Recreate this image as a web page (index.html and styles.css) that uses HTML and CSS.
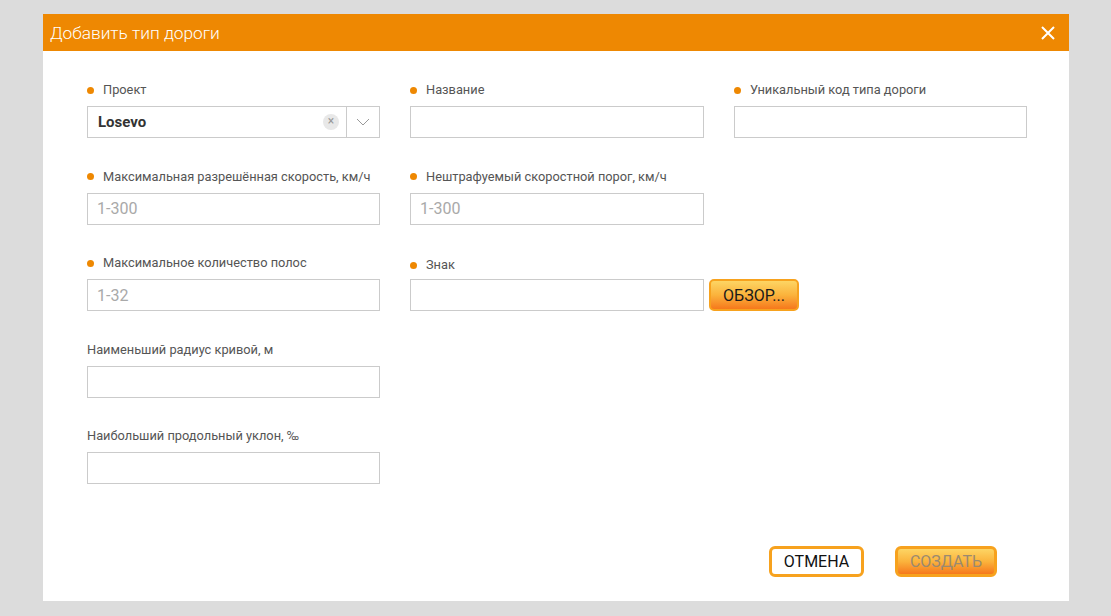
FILE: index.html
```html
<!DOCTYPE html>
<html lang="ru">
<head>
<meta charset="utf-8">
<title>Добавить тип дороги</title>
<link rel="stylesheet" href="styles.css">
</head>
<body>
<div class="dialog">
  <div class="dialog-header">
    <span class="dialog-title">Добавить тип дороги</span>
    <button class="close-btn" aria-label="Закрыть">
      <svg width="14" height="14" viewBox="0 0 14 14"><path d="M1 1L13 13M13 1L1 13" stroke="#fff" stroke-width="2" fill="none"/></svg>
    </button>
  </div>
  <div class="dialog-body">
    <div class="form-grid">
      <div class="field">
        <label class="label required">Проект</label>
        <div class="select">
          <span class="select-value">Losevo</span>
          <span class="select-clear">×</span>
          <span class="select-arrow">
            <svg width="14" height="8" viewBox="0 0 14 8"><path d="M1 1L7 7L13 1" stroke="#999" stroke-width="1" fill="none"/></svg>
          </span>
        </div>
      </div>
      <div class="field">
        <label class="label required">Название</label>
        <input class="input" type="text">
      </div>
      <div class="field">
        <label class="label required">Уникальный код типа дороги</label>
        <input class="input" type="text">
      </div>

      <div class="field">
        <label class="label required">Максимальная разрешённая скорость, км/ч</label>
        <input class="input" type="text" placeholder="1-300">
      </div>
      <div class="field">
        <label class="label required">Нештрафуемый скоростной порог, км/ч</label>
        <input class="input" type="text" placeholder="1-300">
      </div>
      <div class="field empty"></div>

      <div class="field">
        <label class="label required">Максимальное количество полос</label>
        <input class="input" type="text" placeholder="1-32">
      </div>
      <div class="field field-wide">
        <label class="label required label-sign">Знак</label>
        <div class="file-row">
          <input class="input" type="text">
          <button class="btn btn-orange browse">ОБЗОР...</button>
        </div>
      </div>

      <div class="field col1">
        <label class="label">Наименьший радиус кривой, м</label>
        <input class="input" type="text">
      </div>

      <div class="field col1">
        <label class="label">Наибольший продольный уклон, ‰</label>
        <input class="input" type="text">
      </div>
    </div>
  </div>
  <div class="dialog-footer">
    <button class="btn btn-white">ОТМЕНА</button>
    <button class="btn btn-orange btn-disabled">СОЗДАТЬ</button>
  </div>
</div>
</body>
</html>
```

FILE: styles.css
```css
* { box-sizing: border-box; }
html, body { margin: 0; padding: 0; }
body {
  background: #dcdcdc;
  font-family: Roboto, "Liberation Sans", Arial, sans-serif;
  width: 1111px;
  height: 616px;
  overflow: hidden;
  padding: 14px 0 0 43px;
}
.dialog {
  width: 1026px;
  height: 587px;
  background: #fff;
  display: flex;
  flex-direction: column;
}
.dialog-header {
  height: 37px;
  background: #ee8802;
  display: flex;
  align-items: center;
  justify-content: space-between;
  padding: 0 14px 0 7px;
}
.dialog-title {
  color: #fff;
  font-size: 17.3px;
  font-weight: 300;
}
.close-btn {
  background: none;
  border: 0;
  padding: 0;
  width: 14px;
  height: 14px;
  display: flex;
  cursor: pointer;
}
.dialog-body {
  padding: 31px 42px 0 44px;
}
.form-grid {
  display: grid;
  grid-template-columns: 293px 294px 293px;
  column-gap: 30px;
  row-gap: 30.5px;
}
.col1 { grid-column: 1; }
.field-wide { grid-column: 2 / span 2; }
.field { display: flex; flex-direction: column; }
.label {
  display: flex;
  align-items: center;
  height: 16px;
  line-height: 16px;
  font-size: 12.8px;
  color: #555;
  margin-bottom: 8px;
}
.label.required::before {
  content: "";
  width: 7px;
  height: 7px;
  border-radius: 50%;
  background: #ee8802;
  margin: 0 9px 0 0;
  flex: none;
}
.label-sign { position: relative; top: 2px; }
.input {
  width: 293px;
  height: 32px;
  border: 1px solid #cbcbcb;
  background: #fff;
  padding: 0 9px;
  font-family: Roboto, "Liberation Sans", Arial, sans-serif;
  font-size: 16px;
  color: #333;
  outline: none;
}
.field:nth-child(3n+2) .input { width: 294px; }
.input::placeholder { color: #a9a9a9; }
.select {
  width: 293px;
  height: 32px;
  border: 1px solid #cbcbcb;
  display: flex;
  align-items: center;
}
.select-value {
  flex: 1;
  padding-left: 10px;
  font-size: 15px;
  font-weight: 700;
  color: #333;
}
.select-clear {
  width: 16px;
  height: 16px;
  border-radius: 50%;
  background: #e8e8e8;
  color: #999;
  font-size: 12px;
  line-height: 15px;
  text-align: center;
  margin-right: 7px;
}
.select-arrow {
  width: 33px;
  height: 30px;
  border-left: 1px solid #cbcbcb;
  display: flex;
  align-items: center;
  justify-content: center;
}
.file-row {
  display: flex;
  align-items: center;
  gap: 5px;
}
.btn {
  font-family: Roboto, "Liberation Sans", Arial, sans-serif;
  font-size: 16px;
  cursor: pointer;
  padding: 0;
  text-transform: uppercase;
}
.btn-orange {
  border: 2px solid #f7a21e;
  border-radius: 5px;
  background: linear-gradient(to bottom, #fdd564 0%, #fbb33c 50%, #f6781c 100%);
  color: #1a1a1a;
}
.browse {
  width: 90px;
  height: 32px;
}
.dialog-footer {
  margin-top: auto;
  display: flex;
  justify-content: flex-end;
  gap: 31px;
  padding: 0 72px 24px 0;
}
.btn-white {
  width: 95px;
  height: 31px;
  background: #fff;
  border: 3px solid #f7a21e;
  border-radius: 6px;
  color: #111;
}
.btn-disabled {
  width: 102px;
  height: 31px;
  border-width: 3px;
  border-radius: 6px;
  color: #9a8a70;
}
```
